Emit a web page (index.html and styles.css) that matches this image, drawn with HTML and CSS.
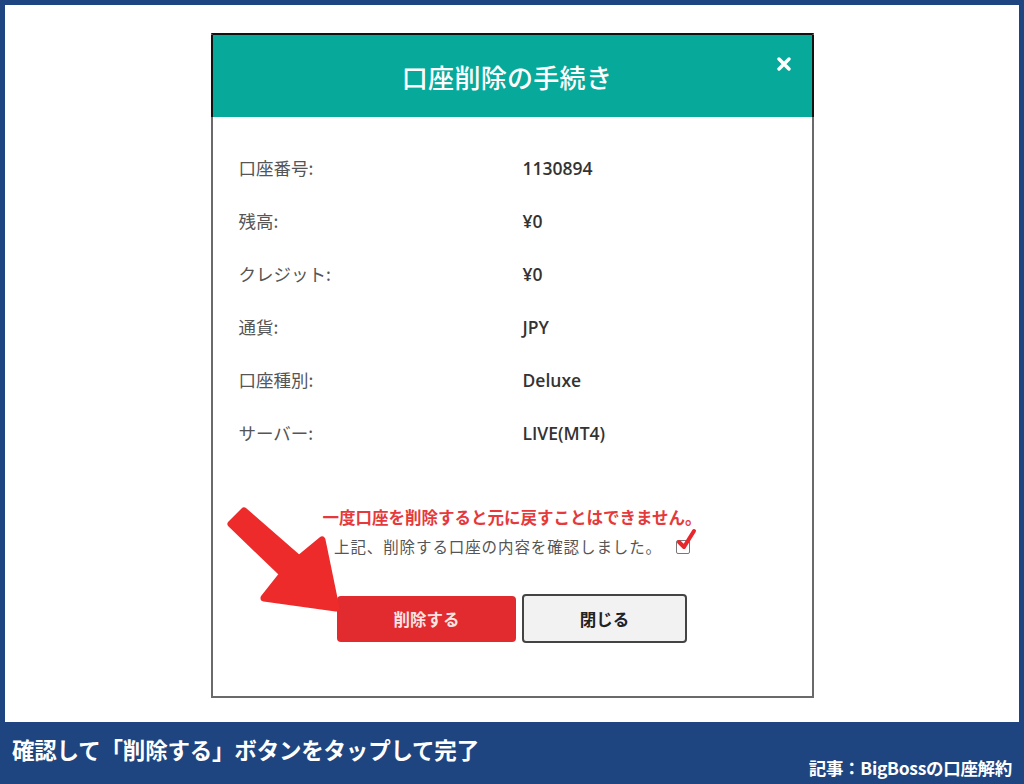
FILE: index.html
```html
<!DOCTYPE html>
<html lang="ja">
<head>
<meta charset="utf-8">
<title>口座削除の手続き</title>
<link rel="stylesheet" href="styles.css">
</head>
<body>
<div class="frame">
  <div class="modal">
    <div class="modal-header">
      <h1 class="modal-title">口座削除の手続き</h1>
      <svg class="modal-close" width="14" height="14" viewBox="0 0 14 14"><path d="M2 2 L12 12 M12 2 L2 12" stroke="#fff" stroke-width="3.4" stroke-linecap="round"/></svg>
    </div>
    <div class="modal-body">
      <div class="info">
        <div class="row"><span class="label">口座番号:</span><span class="value">1130894</span></div>
        <div class="row"><span class="label">残高:</span><span class="value">¥0</span></div>
        <div class="row"><span class="label">クレジット:</span><span class="value">¥0</span></div>
        <div class="row"><span class="label">通貨:</span><span class="value">JPY</span></div>
        <div class="row"><span class="label">口座種別:</span><span class="value">Deluxe</span></div>
        <div class="row"><span class="label">サーバー:</span><span class="value">LIVE(MT4)</span></div>
      </div>
      <p class="warning">一度口座を削除すると元に戻すことはできません。</p>
      <div class="confirm">
        <span class="confirm-text">上記、削除する口座の内容を確認しました。</span>
        <span class="checkbox">
          <svg class="check" width="22" height="24" viewBox="0 0 22 24"><path d="M3 15 L8 20 L18 4" fill="none" stroke="#e8262c" stroke-width="4" stroke-linecap="round" stroke-linejoin="round"/></svg>
        </span>
      </div>
      <div class="buttons">
        <button class="btn btn-delete">削除する</button>
        <button class="btn btn-close">閉じる</button>
      </div>
    </div>
  </div>
  <svg class="arrow" width="1024" height="784" viewBox="0 0 1024 784">
    <polygon points="244,511 299,559 322,540 336,608 264,598 283,574 231,524" fill="#ee2b2b" stroke="#ee2b2b" stroke-width="7" stroke-linejoin="round"/>
  </svg>
</div>
<div class="caption">
  <span class="caption-main">確認して「削除する」ボタンをタップして完了</span>
  <span class="caption-sub">記事：BigBossの口座解約</span>
</div>
</body>
</html>
```
FILE: styles.css
```css
html, body {
  margin: 0;
  padding: 0;
}
body {
  width: 1024px;
  height: 784px;
  background: #1e4580;
  font-family: "Noto Sans CJK JP", "Noto Sans", sans-serif;
  overflow: hidden;
}
.frame {
  position: relative;
  margin: 5px 5px 0 5px;
  height: 717px;
  background: #ffffff;
  display: flex;
  justify-content: center;
  padding-top: 28px;
  box-sizing: border-box;
}
.modal {
  width: 603px;
  height: 665px;
  box-sizing: border-box;
  border: 2px solid #6a6a6a;
  border-top-color: #111;
  background: #fff;
  display: flex;
  flex-direction: column;
}
.modal-header {
  position: relative;
  height: 82px;
  background: #07a99b;
  display: flex;
  align-items: center;
  justify-content: center;
  box-shadow: -2px 0 0 #111, 2px 0 0 #111;
}
.modal-title {
  margin: 0 0 0 -10px;
  color: #fff;
  font-size: 26px;
  font-weight: 500;
  letter-spacing: 0.3px;
}
.modal-close {
  position: absolute;
  right: 21px;
  top: 22px;
}
.modal-body {
  flex: 1;
  padding-top: 24px;
  display: flex;
  flex-direction: column;
  align-items: center;
}
.info {
  align-self: stretch;
  display: flex;
  flex-direction: column;
  padding-left: 26px;
}
.row {
  height: 53px;
  display: grid;
  grid-template-columns: 284px 1fr;
  align-items: center;
}
.label {
  font-size: 17.5px;
  color: #555;
}
.value {
  font-family: "Open Sans", "Noto Sans CJK JP", sans-serif;
  font-size: 17.5px;
  font-weight: 600;
  color: #333;
}
.warning {
  margin: 46px 0 0 0;
  color: #e5393b;
  font-size: 16.5px;
  font-weight: 700;
  line-height: 24px;
}
.confirm {
  display: flex;
  align-items: center;
  gap: 14px;
  margin-top: 4px;
  height: 26px;
}
.confirm-text {
  font-size: 15.5px;
  color: #555;
  letter-spacing: 0.9px;
}
.checkbox {
  position: relative;
  width: 12px;
  height: 12px;
  border: 1.5px solid #777;
  border-radius: 2px;
  margin-top: 2px;
}
.check {
  position: absolute;
  left: -1px;
  top: -14px;
}
.buttons {
  display: flex;
  gap: 6px;
  align-items: center;
  margin-top: 35px;
}
.btn {
  font-family: "Noto Sans CJK JP", sans-serif;
  font-size: 16.5px;
  font-weight: 700;
  border-radius: 4px;
  cursor: pointer;
}
.btn-delete {
  width: 179px;
  height: 46px;
  background: #e12b2e;
  color: #fbe3e3;
  border: none;
}
.btn-close {
  width: 165px;
  height: 49px;
  background: #f2f2f2;
  color: #222;
  border: 2px solid #444;
}
.arrow {
  position: absolute;
  left: -5px;
  top: -5px;
  pointer-events: none;
}
.caption {
  height: 62px;
  position: relative;
  color: #fff;
  font-weight: 700;
}
.caption-main {
  position: absolute;
  left: 12px;
  top: 11px;
  font-size: 22.5px;
  letter-spacing: -0.2px;
}
.caption-sub {
  position: absolute;
  right: 12px;
  top: 33px;
  font-size: 17.5px;
  letter-spacing: -0.3px;
}
```
